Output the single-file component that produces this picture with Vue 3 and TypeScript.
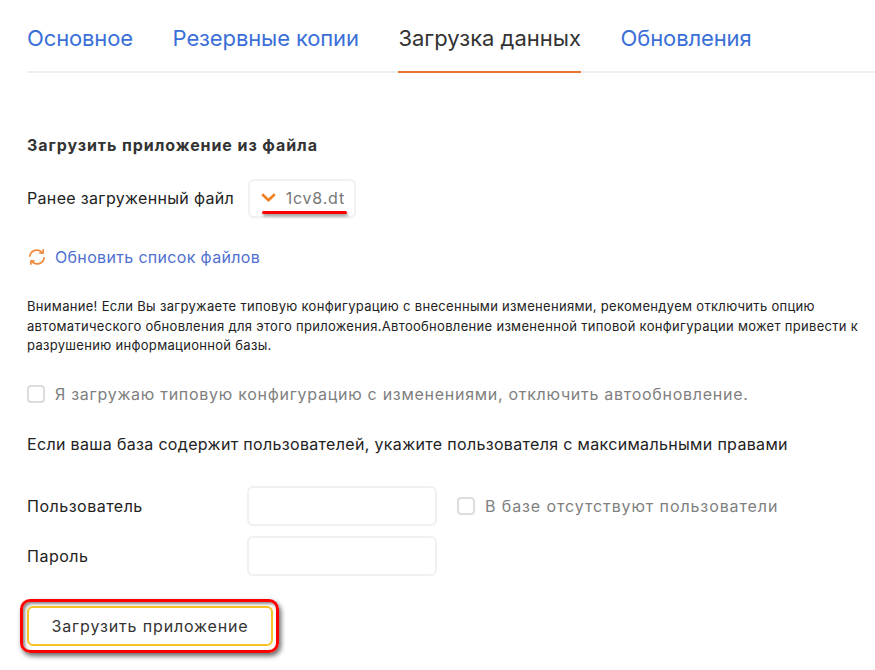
<script setup lang="ts">
const tabs = [
  { label: 'Основное', active: false },
  { label: 'Резервные копии', active: false },
  { label: 'Загрузка данных', active: true },
  { label: 'Обновления', active: false },
]
</script>

<template>
  <div class="page">
    <nav class="tabs">
      <a v-for="t in tabs" :key="t.label" class="tab" :class="{ active: t.active }">{{ t.label }}</a>
    </nav>

    <h2 class="title">Загрузить приложение из файла</h2>

    <div class="file-row">
      <span class="label-text">Ранее загруженный файл</span>
      <div class="select">
        <svg class="chev" width="15" height="9" viewBox="0 0 15 9" fill="none">
          <path d="M1.2 1.2 7.5 7.2l6.3-6" stroke="#f07f22" stroke-width="2.6" />
        </svg>
        <span class="select-value">1cv8.dt</span>
        <span class="underline"></span>
      </div>
    </div>

    <div class="refresh">
      <svg class="refresh-icon" width="18" height="18" viewBox="0 0 18 18" fill="none" stroke="#f08a3c" stroke-width="1.7" stroke-linecap="round" stroke-linejoin="round">
        <path d="M1.9 8.2A7 7 0 0 1 14.2 4.6" />
        <path d="M15.2 1.9 15 5.2l-3.2-.2" />
        <path d="M16.1 9.8A7 7 0 0 1 3.8 13.4" />
        <path d="M2.8 16.1 3 12.8l3.2.2" />
      </svg>
      <a class="link">Обновить список файлов</a>
    </div>

    <p class="warning">
      Внимание! Если Вы загружаете типовую конфигурацию с внесенными изменениями, рекомендуем отключить опцию<br />
      автоматического обновления для этого приложения.Автообновление измененной типовой конфигурации может привести к<br />
      разрушению информационной базы.
    </p>

    <label class="check check-main">
      <span class="box"></span>
      <span>Я загружаю типовую конфигурацию с изменениями, отключить автообновление.</span>
    </label>

    <p class="hint">Если ваша база содержит пользователей, укажите пользователя с максимальными правами</p>

    <div class="form">
      <div class="form-row">
        <span class="label-text field-label">Пользователь</span>
        <div class="input"></div>
        <label class="check check-side">
          <span class="box"></span>
          <span>В базе отсутствуют пользователи</span>
        </label>
      </div>
      <div class="form-row">
        <span class="label-text field-label">Пароль</span>
        <div class="input"></div>
      </div>
    </div>

    <div class="btn-wrap">
      <button class="btn" type="button">Загрузить приложение</button>
      <span class="highlight"></span>
    </div>
  </div>
</template>

<style>
html, body { margin: 0; background: #fff; }
</style>

<style scoped>
.page {
  width: 875px;
  height: 670px;
  box-sizing: border-box;
  padding: 0 0 0 27px;
  overflow: hidden;
  background: #fff;
  font-family: Inter, "Noto Sans", sans-serif;
  color: #222;
}
.tabs {
  display: flex;
  height: 73px;
  box-sizing: border-box;
  border-bottom: 2px solid #eee;
  gap: 39.6px;
}
.tab {
  height: 73px;
  box-sizing: border-box;
  line-height: 76px;
  font-size: 22px;
  letter-spacing: -0.13px;
  color: #3b6fd8;
  white-space: nowrap;
}
.tab.active {
  color: #333;
  letter-spacing: 0;
  border-bottom: 2px solid #e8772e;
}
.title {
  margin: 62px 0 0;
  font-size: 16px;
  line-height: 20px;
  font-weight: 700;
  color: #333;
  letter-spacing: 0.92px;
}
.file-row {
  display: flex;
  align-items: center;
  margin-top: 23px;
  height: 40px;
}
.label-text {
  font-size: 16px;
  letter-spacing: 0.33px;
  color: #222;
}
.select {
  position: relative;
  margin-left: 13.5px;
  height: 39px;
  box-sizing: border-box;
  border: 2px solid #f1f1f1;
  border-radius: 6px;
  display: flex;
  align-items: center;
  padding: 0 9px 0 11px;
  gap: 10px;
  box-shadow: 0 1px 1px rgba(0, 0, 0, .03);
}
.chev { display: block; margin-top: -2px; }
.select-value { font-size: 16px; letter-spacing: 0.8px; color: #777; }
.underline {
  position: absolute;
  left: 12px;
  bottom: 2px;
  width: 85px;
  height: 3px;
  border-radius: 2px;
  background: #f00;
  box-shadow: 1px 2px 3px rgba(0, 0, 0, .45);
}
.refresh {
  display: flex;
  align-items: center;
  gap: 9px;
  margin-top: 27px;
  height: 24px;
}
.refresh-icon { margin-left: 1px; }
.link { font-size: 16px; letter-spacing: 0.33px; color: #4f70d0; }
.warning {
  margin: 28px 0 0;
  font-size: 13px;
  line-height: 19.5px;
  letter-spacing: 0.31px;
  color: #222;
}
.check {
  display: flex;
  align-items: center;
  gap: 10px;
  font-size: 16px;
  color: #808080;
}
.check-main { margin-top: 26px; height: 24px; letter-spacing: 0.72px; }
.box {
  width: 14px;
  height: 14px;
  border: 2px solid #ddd;
  border-radius: 4px;
  flex: none;
}
.hint {
  margin: 26px 0 0;
  font-size: 16px;
  line-height: 24px;
  letter-spacing: 0.33px;
  color: #222;
}
.form {
  margin-top: 30px;
  display: flex;
  flex-direction: column;
  gap: 10px;
}
.form-row {
  display: flex;
  align-items: center;
}
.field-label { width: 220px; flex: none; letter-spacing: 0.5px; }
.input {
  width: 190px;
  height: 40px;
  box-sizing: border-box;
  border: 2px solid #f0f0f0;
  border-radius: 6px;
}
.check-side { margin-left: 20px; letter-spacing: 0.9px; }
.btn-wrap {
  position: relative;
  margin-top: 30px;
  width: 246px;
}
.btn {
  display: block;
  width: 246px;
  height: 40px;
  box-sizing: border-box;
  border: 2px solid #f7c325;
  border-radius: 6px;
  background: #fff;
  font-family: inherit;
  font-size: 16px;
  color: #333;
  letter-spacing: 0.85px;
}
.highlight {
  position: absolute;
  left: -7px;
  top: -7px;
  right: -6px;
  bottom: -7px;
  border: 3px solid #f00;
  border-radius: 10px;
  box-shadow: 2px 3px 5px rgba(0, 0, 0, .6), inset 2px 2px 3px rgba(0, 0, 0, .45);
}
</style>
